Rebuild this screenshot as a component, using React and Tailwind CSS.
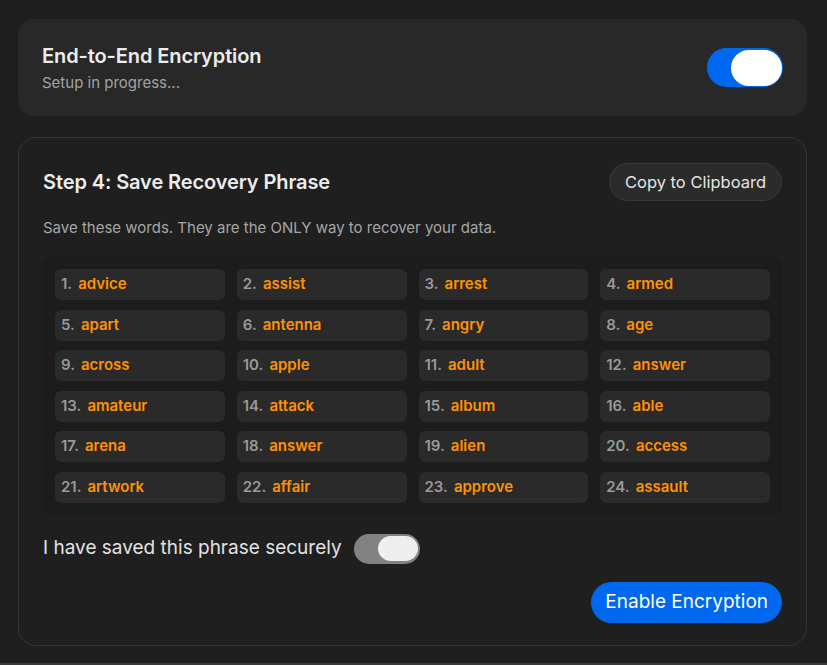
import React from "react";

const words = [
  "advice","assist","arrest","armed","apart","antenna","angry","age",
  "across","apple","adult","answer","amateur","attack","album","able",
  "arena","answer","alien","access","artwork","affair","approve","assault",
];

export default function App() {
  return (
    <div className="w-[827px] h-[665px] bg-[#3a3a3a]" style={{ fontFamily: "Inter, 'Noto Sans', sans-serif" }}>
      <div className="h-[663px] bg-[#1e1e1e] pt-[19px] pl-[18px] pr-[20px]">
        <div className="h-[97px] rounded-[16px] bg-[#282828] flex items-center justify-between pl-6 pr-6">
          <div className="flex flex-col pt-[2px]">
            <div className="text-[20px] font-semibold text-[#ececec] leading-[24px] tracking-[-0.1px]">End-to-End Encryption</div>
            <div className="text-[15px] text-[#a3a3a3] leading-[20px] mt-[5px]">Setup in progress...</div>
          </div>
          <div className="w-[76px] h-[39px] rounded-full bg-[#0068ee] flex items-center justify-end pr-[1px]">
            <div className="w-[51px] h-[36px] rounded-full bg-white" />
          </div>
        </div>

        <div className="mt-[21px] h-[509px] rounded-[18px] border border-[#343434] bg-[#1f1f1f] px-6 pt-[25px]">
          <div className="flex items-center justify-between">
            <div className="text-[20px] font-semibold text-[#ececec] tracking-[-0.1px]">Step 4: Save Recovery Phrase</div>
            <div className="h-[38px] px-[15px] rounded-full bg-[#2b2b2b] border border-[#3a3a3a] flex items-center text-[16.5px] text-[#e4e4e4]">Copy to Clipboard</div>
          </div>
          <div className="mt-[17px] text-[15px] text-[#a6a6a6] leading-[20px]">Save these words. They are the ONLY way to recover your data.</div>
          <div className="mt-[19px] p-3 rounded-[8px] bg-[#1c1c1c] grid grid-cols-4 gap-x-3 gap-y-[9.5px]">
            {words.map((w, i) => (
              <div key={i} className="h-[31px] rounded-[6px] bg-[#2a2a2a] flex items-center pl-[6px] text-[15px] font-semibold">
                <span className="text-[#999999]">{i + 1}.</span>
                <span className="ml-[6px] text-[#ff9204]">{w}</span>
              </div>
            ))}
          </div>
          <div className="mt-[19px] flex items-center gap-3">
            <div className="text-[19px] text-[#e2e2e2]">I have saved this phrase securely</div>
            <div className="w-[66px] h-[30px] rounded-full bg-[#828282] flex items-center justify-end pr-[2px]">
              <div className="w-[40px] h-[25px] rounded-full bg-[#eeeeee]" />
            </div>
          </div>
          <div className="mt-[18px] flex justify-end">
            <div className="h-[41px] px-[14px] rounded-full bg-[#0068ee] flex items-center text-[19px] text-white">Enable Encryption</div>
          </div>
        </div>
      </div>
    </div>
  );
}
